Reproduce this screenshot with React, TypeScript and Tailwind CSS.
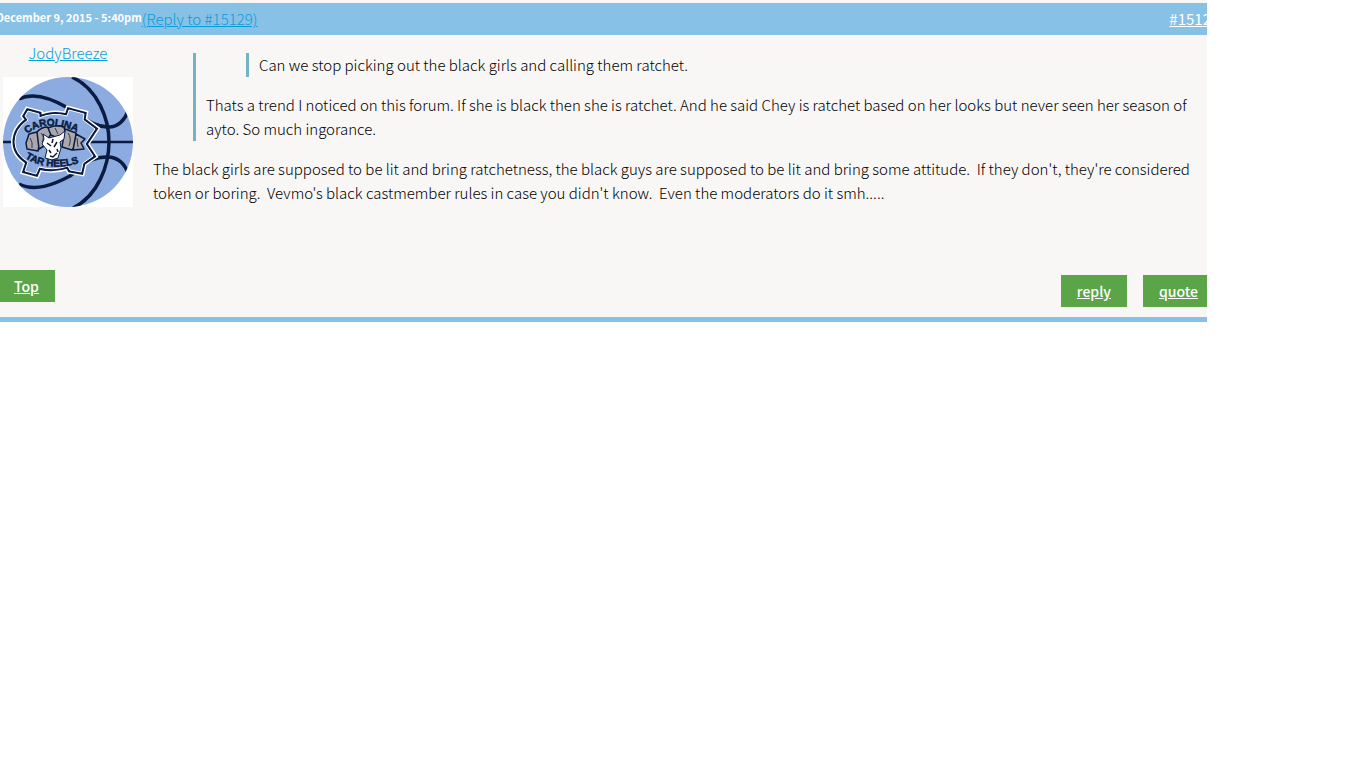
const linkClass = 'text-[#069ddb] underline';
const buttonClass = 'h-8 px-4 bg-[#5ba548] text-white text-[14px] font-medium underline';

function Avatar() {
  const badge =
    'M25 34 L36 37 L36 41 Q50 35 64 39 L66 33 L81 37 L80 43 L92 52 L82 67 L90 79 L80 86 L78 95 L67 93 L65 89 Q50 94 36 90 L33 97 L22 94 L25 85 Q12 77 12 65 Q12 52 25 43 L22 39 Z';

  return (
    <svg viewBox="0 0 130 130" className="block w-[130px] h-[130px] bg-white" role="img" aria-label="JodyBreeze's picture">
      <defs>
        <path id="arc-top" d="M24 57 Q46 39 84 60" />
        <path id="arc-bottom" d="M22 81 Q50 98 86 82" />
        <clipPath id="ball">
          <circle cx="65" cy="65" r="65" />
        </clipPath>
      </defs>
      <circle cx="65" cy="65" r="65" fill="#8cabe0" />
      <g fill="none" stroke="#0b1c42" strokeWidth="3.5" clipPath="url(#ball)">
        <path d="M69 0 C95 12 106 42 106 65 C106 88 95 119 70 131" />
        <path d="M16 22 C30 15 48 21 65 31 C83 42 91 50 106 50 C115 50 122 43 125 34" />
        <path d="M16 107 C32 115 50 108 67 99 C82 88 88 79 106 80 C116 81 122 88 125 96" />
        <path d="M0 65 H130" strokeWidth="2.5" />
      </g>
      <g strokeLinejoin="miter">
        <path d={badge} fill="#8cabe0" stroke="#ffffff" strokeWidth="8" />
        <path d={badge} fill="#8cabe0" stroke="#0b1c42" strokeWidth="5" />
        <path d={badge} fill="#8cabe0" stroke="#ffffff" strokeWidth="1" />
      </g>
      <g fill="#aaa8ac" stroke="#0b1c42" strokeWidth="1.5" strokeLinejoin="round">
        <path d="M23 66 L26 57 L34 55 L37 63 L35 74 L24 72 Z" />
        <path d="M34 55 Q38 50 45 50 L48 57 L41 69 L36 72 Z" />
        <path d="M45 51 Q54 47 61 50 L63 58 L57 62 L48 58 Z" />
        <path d="M62 52 L73 56 L74 67 L69 73 L59 70 Z" />
        <path d="M73 57 L82 62 L78 66 L81 72 L70 73 Z" />
      </g>
      <g fill="none" stroke="#0b1c42" strokeWidth="0.8">
        <path d="M27 61 Q30 65 29 71 M38 56 Q42 60 39 65 M52 51 L55 57 M65 56 Q69 61 66 69 M74 61 L75 70" />
      </g>
      <path
        d="M40 57 L46 61 L57 58 L62 54 L61 62 L57 65 L58 71 L55 81 L49 83 L42 81 L44 73 L39 67 L41 62 Z"
        fill="#ffffff"
        stroke="#0b1c42"
        strokeWidth="1"
      />
      <path d="M44 66 L48 69 M54 65 L51 70 M47 79 L50 80 L54 76 M50 62 L49 66 M46 73 L48 76 M54 72 L55 75" fill="none" stroke="#0b1c42" strokeWidth="1.5" />
      <g
        fill="#0b1c42"
        stroke="#0b1c42"
        strokeWidth="0.5"
        fontFamily="Liberation Sans, sans-serif"
        fontWeight="700"
        fontSize="10"
      >
        <text>
          <textPath href="#arc-top">CAROLINA</textPath>
        </text>
        <text>
          <textPath href="#arc-bottom">TAR HEELS</textPath>
        </text>
      </g>
    </svg>
  );
}

export default function App() {
  return (
    <main className="pr-[159px] font-['Noto_Sans_CJK_SC',sans-serif] font-light text-[15px] leading-6 text-black">
      <article className="overflow-hidden bg-[#f8f7f5] pt-[3px] border-b-[5px] border-[#88c1e6]">
        <header className="flex justify-between bg-[#88c1e6] h-8 -mx-1 pt-1">
          <div className="flex">
            <time className="text-[11px] leading-5 font-bold text-white">December 9, 2015 - 5:40pm</time>
            <a href="#15129" className={linkClass}>(Reply to #15129)</a>
          </div>
          <a href="#1512" className="font-normal text-white underline">#1512</a>
        </header>

        <div className="flex pt-[18px]">
          <aside className="w-[133px] pl-[3px] shrink-0 -mt-3">
            <a href="#user" className={`block text-center mb-3 ${linkClass}`}>JodyBreeze</a>
            <Avatar />
          </aside>
          <div className="flex-1 pl-5 pr-3 min-h-[200px]">
            <blockquote className="ml-10 pl-[10px] mb-4 border-l-[3px] border-[#73b4c4]">
              <blockquote className="ml-10 pl-[10px] mb-4 border-l-[3px] border-[#73b4c4]">
                <p>Can we stop picking out the black girls and calling them ratchet.</p>
              </blockquote>
              <p>
                Thats a trend I noticed on this forum. If she is black then she is ratchet. And he said Chey is ratchet
                based on her looks but never seen her season of ayto. So much ingorance.
              </p>
            </blockquote>
            <p>
              The black girls are supposed to be lit and bring ratchetness, the black guys are supposed to be lit and
              bring some attitude.&nbsp; If they don't, they're considered token or boring.&nbsp; Vevmo's black
              castmember rules in case you didn't know.&nbsp; Even the moderators do it smh.....
            </p>
          </div>
        </div>

        <footer className="flex items-start justify-between -mx-[2px] pt-[17px] pb-[10px]">
          <button className={buttonClass}>Top</button>
          <div className="flex gap-4 pt-[5px] -mr-[5px]">
            <button className={buttonClass}>reply</button>
            <button className={buttonClass}>quote</button>
          </div>
        </footer>
      </article>
    </main>
  );
}
